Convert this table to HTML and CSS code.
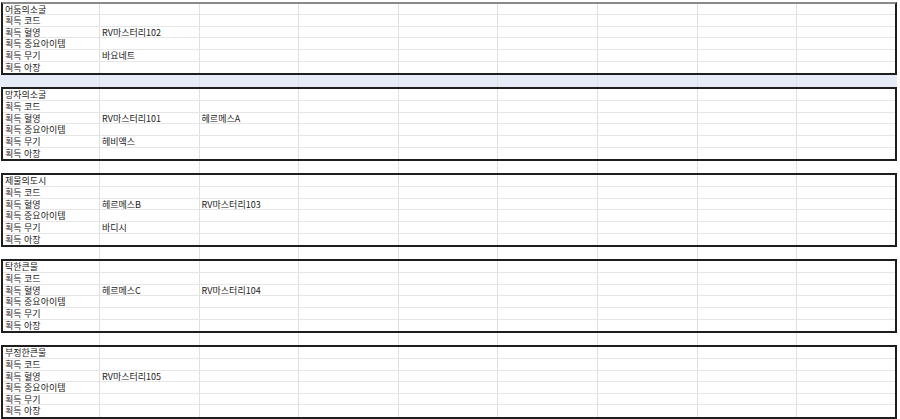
FILE: index.html
```html
<!DOCTYPE html>
<html lang="ko">
<head>
<meta charset="utf-8">
<link rel="stylesheet" href="styles.css">
</head>
<body>
<div class="sheet">
  <div class="group first">
    <div class="row"><div class="c">어둠의소굴</div><div class="c"></div><div class="c"></div><div class="c"></div><div class="c"></div><div class="c"></div><div class="c"></div><div class="c"></div><div class="c"></div></div>
    <div class="row"><div class="c">획득 코드</div><div class="c"></div><div class="c"></div><div class="c"></div><div class="c"></div><div class="c"></div><div class="c"></div><div class="c"></div><div class="c"></div></div>
    <div class="row"><div class="c">획득 혈영</div><div class="c">RV마스터리102</div><div class="c"></div><div class="c"></div><div class="c"></div><div class="c"></div><div class="c"></div><div class="c"></div><div class="c"></div></div>
    <div class="row"><div class="c">획득 중요아이템</div><div class="c"></div><div class="c"></div><div class="c"></div><div class="c"></div><div class="c"></div><div class="c"></div><div class="c"></div><div class="c"></div></div>
    <div class="row"><div class="c">획득 무기</div><div class="c">바요네트</div><div class="c"></div><div class="c"></div><div class="c"></div><div class="c"></div><div class="c"></div><div class="c"></div><div class="c"></div></div>
    <div class="row"><div class="c">획득 아장</div><div class="c"></div><div class="c"></div><div class="c"></div><div class="c"></div><div class="c"></div><div class="c"></div><div class="c"></div><div class="c"></div></div>
  </div>
  <div class="row spacer selected"><div class="c"></div><div class="c"></div><div class="c"></div><div class="c"></div><div class="c"></div><div class="c"></div><div class="c"></div><div class="c"></div><div class="c"></div></div>
  <div class="group">
    <div class="row"><div class="c">망자의소굴</div><div class="c"></div><div class="c"></div><div class="c"></div><div class="c"></div><div class="c"></div><div class="c"></div><div class="c"></div><div class="c"></div></div>
    <div class="row"><div class="c">획득 코드</div><div class="c"></div><div class="c"></div><div class="c"></div><div class="c"></div><div class="c"></div><div class="c"></div><div class="c"></div><div class="c"></div></div>
    <div class="row"><div class="c">획득 혈영</div><div class="c">RV마스터리101</div><div class="c">헤르메스A</div><div class="c"></div><div class="c"></div><div class="c"></div><div class="c"></div><div class="c"></div><div class="c"></div></div>
    <div class="row"><div class="c">획득 중요아이템</div><div class="c"></div><div class="c"></div><div class="c"></div><div class="c"></div><div class="c"></div><div class="c"></div><div class="c"></div><div class="c"></div></div>
    <div class="row"><div class="c">획득 무기</div><div class="c">헤비액스</div><div class="c"></div><div class="c"></div><div class="c"></div><div class="c"></div><div class="c"></div><div class="c"></div><div class="c"></div></div>
    <div class="row"><div class="c">획득 아장</div><div class="c"></div><div class="c"></div><div class="c"></div><div class="c"></div><div class="c"></div><div class="c"></div><div class="c"></div><div class="c"></div></div>
  </div>
  <div class="row spacer"><div class="c"></div><div class="c"></div><div class="c"></div><div class="c"></div><div class="c"></div><div class="c"></div><div class="c"></div><div class="c"></div><div class="c"></div></div>
  <div class="group">
    <div class="row"><div class="c">제물의도시</div><div class="c"></div><div class="c"></div><div class="c"></div><div class="c"></div><div class="c"></div><div class="c"></div><div class="c"></div><div class="c"></div></div>
    <div class="row"><div class="c">획득 코드</div><div class="c"></div><div class="c"></div><div class="c"></div><div class="c"></div><div class="c"></div><div class="c"></div><div class="c"></div><div class="c"></div></div>
    <div class="row"><div class="c">획득 혈영</div><div class="c">헤르메스B</div><div class="c">RV마스터리103</div><div class="c"></div><div class="c"></div><div class="c"></div><div class="c"></div><div class="c"></div><div class="c"></div></div>
    <div class="row"><div class="c">획득 중요아이템</div><div class="c"></div><div class="c"></div><div class="c"></div><div class="c"></div><div class="c"></div><div class="c"></div><div class="c"></div><div class="c"></div></div>
    <div class="row"><div class="c">획득 무기</div><div class="c">바디시</div><div class="c"></div><div class="c"></div><div class="c"></div><div class="c"></div><div class="c"></div><div class="c"></div><div class="c"></div></div>
    <div class="row"><div class="c">획득 아장</div><div class="c"></div><div class="c"></div><div class="c"></div><div class="c"></div><div class="c"></div><div class="c"></div><div class="c"></div><div class="c"></div></div>
  </div>
  <div class="row spacer"><div class="c"></div><div class="c"></div><div class="c"></div><div class="c"></div><div class="c"></div><div class="c"></div><div class="c"></div><div class="c"></div><div class="c"></div></div>
  <div class="group">
    <div class="row"><div class="c">탁한큰물</div><div class="c"></div><div class="c"></div><div class="c"></div><div class="c"></div><div class="c"></div><div class="c"></div><div class="c"></div><div class="c"></div></div>
    <div class="row"><div class="c">획득 코드</div><div class="c"></div><div class="c"></div><div class="c"></div><div class="c"></div><div class="c"></div><div class="c"></div><div class="c"></div><div class="c"></div></div>
    <div class="row"><div class="c">획득 혈영</div><div class="c">헤르메스C</div><div class="c">RV마스터리104</div><div class="c"></div><div class="c"></div><div class="c"></div><div class="c"></div><div class="c"></div><div class="c"></div></div>
    <div class="row"><div class="c">획득 중요아이템</div><div class="c"></div><div class="c"></div><div class="c"></div><div class="c"></div><div class="c"></div><div class="c"></div><div class="c"></div><div class="c"></div></div>
    <div class="row"><div class="c">획득 무기</div><div class="c"></div><div class="c"></div><div class="c"></div><div class="c"></div><div class="c"></div><div class="c"></div><div class="c"></div><div class="c"></div></div>
    <div class="row"><div class="c">획득 아장</div><div class="c"></div><div class="c"></div><div class="c"></div><div class="c"></div><div class="c"></div><div class="c"></div><div class="c"></div><div class="c"></div></div>
  </div>
  <div class="row spacer"><div class="c"></div><div class="c"></div><div class="c"></div><div class="c"></div><div class="c"></div><div class="c"></div><div class="c"></div><div class="c"></div><div class="c"></div></div>
  <div class="group">
    <div class="row"><div class="c">부정한큰물</div><div class="c"></div><div class="c"></div><div class="c"></div><div class="c"></div><div class="c"></div><div class="c"></div><div class="c"></div><div class="c"></div></div>
    <div class="row"><div class="c">획득 코드</div><div class="c"></div><div class="c"></div><div class="c"></div><div class="c"></div><div class="c"></div><div class="c"></div><div class="c"></div><div class="c"></div></div>
    <div class="row"><div class="c">획득 혈영</div><div class="c">RV마스터리105</div><div class="c"></div><div class="c"></div><div class="c"></div><div class="c"></div><div class="c"></div><div class="c"></div><div class="c"></div></div>
    <div class="row"><div class="c">획득 중요아이템</div><div class="c"></div><div class="c"></div><div class="c"></div><div class="c"></div><div class="c"></div><div class="c"></div><div class="c"></div><div class="c"></div></div>
    <div class="row"><div class="c">획득 무기</div><div class="c"></div><div class="c"></div><div class="c"></div><div class="c"></div><div class="c"></div><div class="c"></div><div class="c"></div><div class="c"></div></div>
    <div class="row"><div class="c">획득 아장</div><div class="c"></div><div class="c"></div><div class="c"></div><div class="c"></div><div class="c"></div><div class="c"></div><div class="c"></div><div class="c"></div></div>
  </div>
</div>
</body>
</html>
```

FILE: styles.css
```css
html, body {
  margin: 0;
  padding: 0;
  background: #ffffff;
}

body {
  font-family: "Noto Sans CJK KR", "Noto Sans", sans-serif;
  font-size: 9px;
  color: #222222;
}

.sheet {
  width: 896px;
  padding: 1.5px 0 0 1px;
}

.group {
  border: 2px solid #1e1e1e;
  box-sizing: border-box;
}

.group.first {
  border-top-color: #8a8a8a;
}

.row {
  display: grid;
  grid-template-columns: 97px repeat(7, 99.6px) 1fr;
  height: 11.65px;
  box-sizing: border-box;
  border-bottom: 1px solid #e6e6e6;
}

.group .row:last-child {
  border-bottom: none;
}

.c {
  border-right: 1px solid #e0e0e0;
  padding: 1px 0 0 2px;
  line-height: 10px;
  white-space: nowrap;
  overflow: visible;
}

.c:last-child {
  border-right: none;
}

.spacer {
  height: 12.1px;
  border-bottom: none;
  margin-left: -1px;
  padding-left: 3px;
}

.spacer.selected {
  background: #e6ebf8;
}
```
